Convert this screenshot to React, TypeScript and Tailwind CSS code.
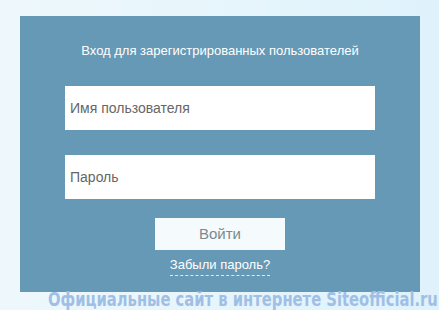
export default function App() {
  return (
    <div
      className="w-[439px] h-[310px] overflow-hidden bg-gradient-to-r from-[#eef8fc] to-[#dff2fb] pt-4 relative"
      style={{ fontFamily: '"Liberation Sans", Arial, sans-serif' }}
    >
      <div className="ml-5 w-[400px] h-[276px] bg-[#6699b5] flex flex-col items-center">
        <p className="mt-[27px] text-[13px] leading-[16px] text-white">
          Вход для зарегистрированных пользователей
        </p>
        <div className="mt-[27px] w-[310px] flex flex-col gap-[25px]">
          <div className="h-[44px] bg-white flex items-center pl-[5px] text-[14px] text-[#666]">
            Имя пользователя
          </div>
          <div className="h-[44px] bg-white flex items-center pl-[5px] text-[14px] text-[#666]">
            Пароль
          </div>
        </div>
        <button className="mt-[19px] w-[130px] h-[32px] bg-[#f5fbfd] text-[15px] text-[#7a8a90]">
          Войти
        </button>
        <a className="mt-[7px] text-[13px] leading-[16px] text-white pb-[2px] border-b border-dashed border-white/80">
          Забыли пароль?
        </a>
      </div>
      <div className="absolute left-[48px] top-[289px] w-[391px] overflow-visible">
        <span
          className="inline-block origin-left whitespace-nowrap text-[20px] leading-[20px] font-bold text-[#a0bfe6] scale-x-[0.82]"
          style={{ fontFamily: '"DejaVu Sans Condensed", "Liberation Sans", sans-serif' }}
        >
          Официальные сайт в интернете Siteofficial.ru
        </span>
      </div>
    </div>
  );
}
